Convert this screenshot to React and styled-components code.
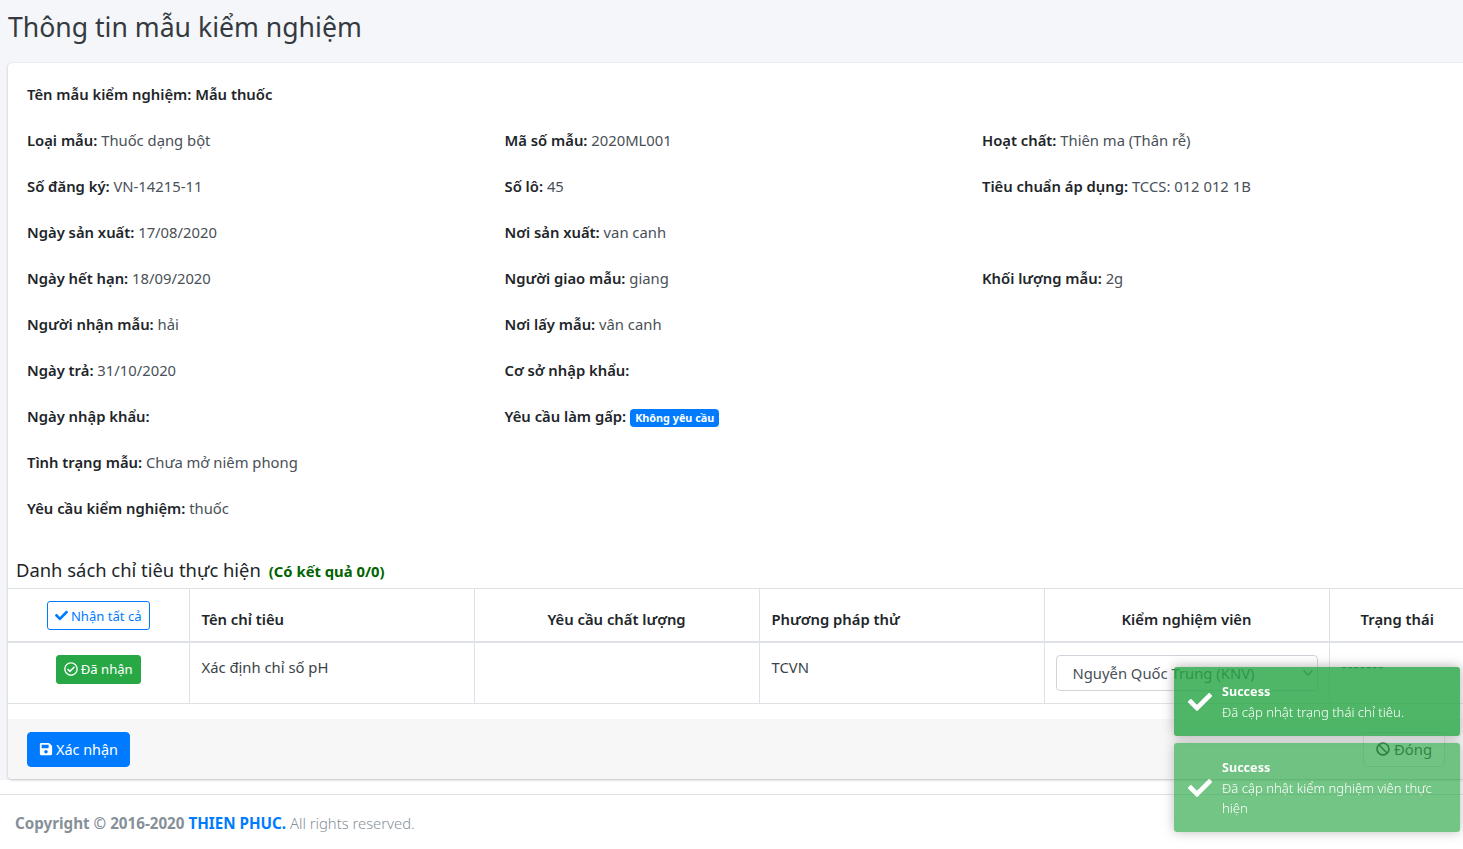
import React from 'react'
import styled, { createGlobalStyle } from 'styled-components'
import { FaCheck, FaRegCheckCircle, FaSave, FaBan } from 'react-icons/fa'
import { ChevronDown } from 'lucide-react'

const GlobalStyle = createGlobalStyle`
  html, body {
    margin: 0;
    height: 849px;
    overflow: hidden;
    background: #fff;
    font-family: "Noto Sans", "Liberation Sans", sans-serif;
    font-size: 14.8px;
    color: #212529;
  }
  * { box-sizing: border-box; }
`

const Main = styled.div`
  background: #f4f6f9;
  padding: 0 0 1px 8px;
`
const PageTitle = styled.h1`
  margin: 0;
  height: 63px;
  padding-top: 7px;
  font-size: 26.6px;
  line-height: 40px;
  font-weight: 400;
  color: #343a40;
`
const Card = styled.div`
  width: 1455px;
  background: #fff;
  border-radius: 4px 0 0 4px;
  box-shadow: 0 0 1px rgba(0, 0, 0, .125), 0 1px 3px rgba(0, 0, 0, .2);
  overflow: hidden;
`
const InfoGrid = styled.div`
  display: grid;
  grid-template-columns: repeat(3, 477.5px);
  padding: 19px 0 0 19px;
`
const InfoItem = styled.div`
  grid-column: ${p => (p.$full ? '1 / -1' : 'auto')};
  height: 46px;
  line-height: 24px;
  color: #495057;
  font-weight: 400;
`
const Label = styled.b`
  color: #212529;
  font-weight: 600;
`
const Badge = styled.span`
  display: inline-block;
  margin-left: 4px;
  padding: 3px 5px;
  background: #007bff;
  border-radius: 4px;
  color: #fff;
  font-size: 10.8px;
  line-height: 12px;
  font-weight: 700;
  vertical-align: 0;
`
const SectionTitle = styled.div`
  display: flex;
  align-items: baseline;
  gap: 8px;
  height: 46px;
  padding: 13px 0 0 8px;
  font-size: 18.4px;
  line-height: 30px;
`
const ResultCount = styled.span`
  color: #006400;
  font-size: 14.8px;
  font-weight: 700;
`
const Table = styled.table`
  width: 1457px;
  table-layout: fixed;
  border-collapse: collapse;
  border-top: 1px solid #dee2e6;
`
const Th = styled.th`
  width: ${p => p.$w}px;
  height: 53px;
  padding: 12px;
  text-align: ${p => p.$align || 'center'};
  font-weight: 600;
  border-left: 1px solid #dee2e6;
  border-bottom: 2px solid #dee2e6;
  vertical-align: ${p => (p.$top ? 'top' : 'bottom')};
  &:first-child { border-left: 0; padding: 12px 0 0; }
`
const Td = styled.td`
  height: 60px;
  padding: 12px;
  font-weight: 400;
  color: #3b4248;
  border-left: 1px solid #dee2e6;
  border-bottom: 1px solid #dee2e6;
  vertical-align: top;
  text-align: ${p => p.$align || 'left'};
  &:first-child { border-left: 0; padding: 12px 0 0; }
`
const TextCell = styled(Td)`
  padding-top: 14px;
`
const StatusCell = styled(Td)`
  padding-top: 13px;
  letter-spacing: 1.4px;
`
const SmallButton = styled.span`
  display: inline-flex;
  align-items: center;
  gap: 3px;
  height: 29px;
  padding: 0 7px;
  border-radius: 3px;
  border: 1px solid ${p => (p.$outline ? '#007bff' : '#28a745')};
  background: ${p => (p.$outline ? '#fff' : '#28a745')};
  color: ${p => (p.$outline ? '#007bff' : '#fff')};
  font-size: 13.1px;
  font-weight: 400;
`
const SelectWrap = styled.div`
  position: relative;
  width: 262px;
  margin-left: -1px;
`
const Select = styled.select`
  width: 100%;
  height: 36px;
  padding: 0 16px;
  appearance: none;
  background: #fff;
  border: 1px solid #ced4da;
  border-radius: 4px;
  color: #495057;
  font: 400 14.8px "Noto Sans", sans-serif;
`
const SelectArrow = styled(ChevronDown)`
  position: absolute;
  right: 2px;
  top: 10px;
  color: #6c757d;
`
const CardFooter = styled.div`
  display: flex;
  justify-content: space-between;
  margin-top: 15px;
  height: 60px;
  padding: 13px 18px 0 19px;
  background: #f7f7f7;
`
const Button = styled.span`
  display: inline-flex;
  align-items: center;
  gap: ${p => (p.$primary ? 3 : 4)}px;
  height: 35px;
  padding: 0 ${p => (p.$primary ? 11 : 12)}px;
  border-radius: 4px;
  border: 1px solid ${p => (p.$primary ? '#007bff' : '#ddd')};
  background: ${p => (p.$primary ? '#007bff' : '#f8f9fa')};
  color: ${p => (p.$primary ? '#fff' : '#444')};
  font-size: ${p => (p.$primary ? 14.4 : 14.8)}px;
  font-weight: 400;
`
const PageFooter = styled.footer`
  margin-top: 14px;
  border-top: 1px solid #dee2e6;
  padding: 16px 0 0 15px;
  line-height: 24px;
  font-size: 14.8px;
  font-weight: 300;
  color: #869099;
`
const FooterStrong = styled.b`
  font-size: 15.2px;
  font-weight: 700;
  color: #869099;
`
const FooterLink = styled.b`
  font-size: 15.2px;
  font-weight: 700;
  color: #007bff;
`
const ToastStack = styled.div`
  position: fixed;
  top: 667px;
  left: 1174px;
  width: 286px;
  display: flex;
  flex-direction: column;
  gap: 7px;
`
const Toast = styled.div`
  display: flex;
  align-items: center;
  gap: 10px;
  padding: 14.5px 15px 14.5px 14px;
  background: #28a745;
  opacity: ${p => p.$opacity};
  border-radius: 3px;
  color: #fff;
  font-size: 13.1px;
  line-height: 20px;
  font-weight: 300;
  box-shadow: 0 0 12px #999;
`
const ToastBody = styled.div`
  flex: 1;
`
const ToastTitle = styled.div`
  font-size: 12.6px;
  font-weight: 700;
`

const infoRows = [
  [['Loại mẫu:', 'Thuốc dạng bột'], ['Mã số mẫu:', '2020ML001'], ['Hoạt chất:', 'Thiên ma (Thân rễ)']],
  [['Số đăng ký:', 'VN-14215-11'], ['Số lô:', '45'], ['Tiêu chuẩn áp dụng:', 'TCCS: 012 012 1B']],
  [['Ngày sản xuất:', '17/08/2020'], ['Nơi sản xuất:', 'van canh'], null],
  [['Ngày hết hạn:', '18/09/2020'], ['Người giao mẫu:', 'giang'], ['Khối lượng mẫu:', '2g']],
  [['Người nhận mẫu:', 'hải'], ['Nơi lấy mẫu:', 'vân canh'], null],
  [['Ngày trả:', '31/10/2020'], ['Cơ sở nhập khẩu:', ''], null],
]

const App = () => (
  <div>
    <GlobalStyle />
    <Main>
      <PageTitle>Thông tin mẫu kiểm nghiệm</PageTitle>
      <Card>
        <InfoGrid>
          <InfoItem $full><Label>Tên mẫu kiểm nghiệm: Mẫu thuốc</Label></InfoItem>
          {infoRows.flat().map((item, i) => (
            <InfoItem key={i}>
              {item && <><Label>{item[0]}</Label> {item[1]}</>}
            </InfoItem>
          ))}
          <InfoItem><Label>Ngày nhập khẩu:</Label></InfoItem>
          <InfoItem><Label>Yêu cầu làm gấp:</Label><Badge>Không yêu cầu</Badge></InfoItem>
          <InfoItem />
          <InfoItem $full><Label>Tình trạng mẫu:</Label> Chưa mở niêm phong</InfoItem>
          <InfoItem $full><Label>Yêu cầu kiểm nghiệm:</Label> thuốc</InfoItem>
        </InfoGrid>
        <SectionTitle>
          Danh sách chỉ tiêu thực hiện <ResultCount>(Có kết quả 0/0)</ResultCount>
        </SectionTitle>
        <Table>
          <thead>
            <tr>
              <Th $w={181} $top><SmallButton $outline><FaCheck size={13} /> Nhận tất cả</SmallButton></Th>
              <Th $w={285} $align="left">Tên chỉ tiêu</Th>
              <Th $w={285}>Yêu cầu chất lượng</Th>
              <Th $w={285} $align="left">Phương pháp thử</Th>
              <Th $w={285}>Kiểm nghiệm viên</Th>
              <Th $w={136}>Trạng thái</Th>
            </tr>
          </thead>
          <tbody>
            <tr>
              <Td $align="center"><SmallButton><FaRegCheckCircle size={14} /> Đã nhận</SmallButton></Td>
              <TextCell>Xác định chỉ số pH</TextCell>
              <Td />
              <TextCell>TCVN</TextCell>
              <Td>
                <SelectWrap>
                  <Select defaultValue="knv">
                    <option value="knv">Nguyễn Quốc Trung (KNV)</option>
                  </Select>
                  <SelectArrow size={16} />
                </SelectWrap>
              </Td>
              <StatusCell>-------</StatusCell>
            </tr>
          </tbody>
        </Table>
        <CardFooter>
          <Button $primary><FaSave size={14} /> Xác nhận</Button>
          <Button><FaBan size={14} /> Đóng</Button>
        </CardFooter>
      </Card>
    </Main>
    <PageFooter>
      <FooterStrong>Copyright © 2016-2020 </FooterStrong>
      <FooterLink>THIEN PHUC.</FooterLink> All rights reserved.
    </PageFooter>
    <ToastStack>
      <Toast $opacity={0.82}>
        <FaCheck size={24} />
        <ToastBody>
          <ToastTitle>Success</ToastTitle>
          Đã cập nhật trạng thái chỉ tiêu.
        </ToastBody>
      </Toast>
      <Toast $opacity={0.65}>
        <FaCheck size={24} />
        <ToastBody>
          <ToastTitle>Success</ToastTitle>
          Đã cập nhật kiểm nghiệm viên thực hiện
        </ToastBody>
      </Toast>
    </ToastStack>
  </div>
)

export default App
